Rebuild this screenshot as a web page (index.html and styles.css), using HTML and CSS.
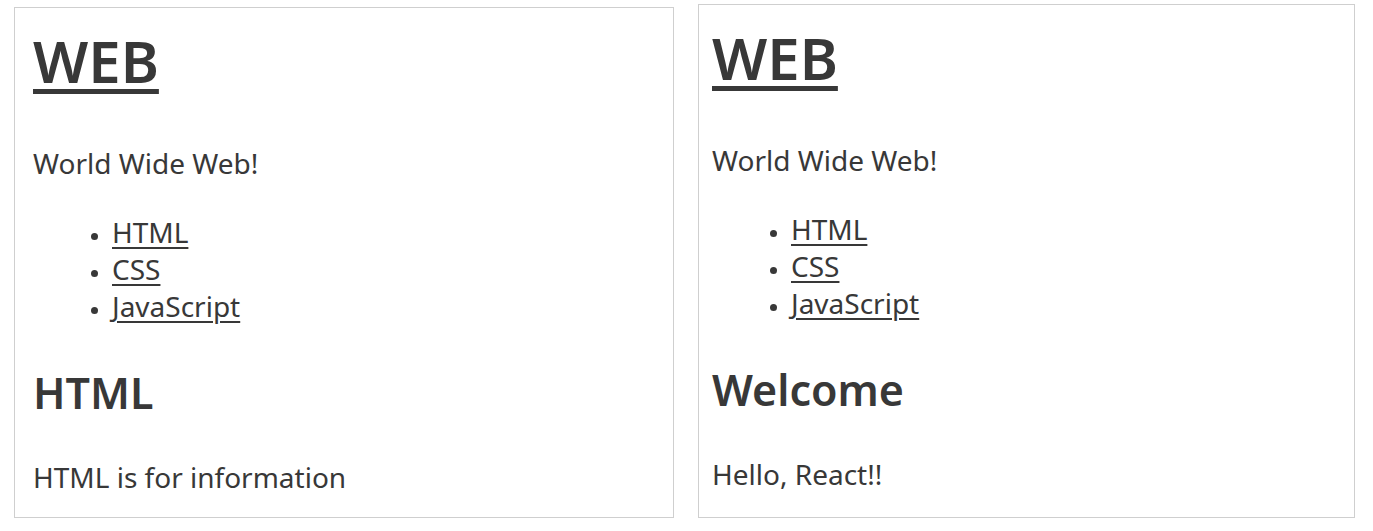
FILE: index.html
```html
<!DOCTYPE html>
<html lang="en">
<head>
<meta charset="utf-8">
<title>WEB</title>
<link rel="stylesheet" href="styles.css">
</head>
<body>
<div class="page">
  <div class="panel panel-left">
    <h1 class="title"><a href="#">WEB</a></h1>
    <p class="text">World Wide Web!</p>
    <ul class="nav">
      <li><a href="#">HTML</a></li>
      <li><a href="#">CSS</a></li>
      <li><a href="#">JavaScript</a></li>
    </ul>
    <h2 class="subtitle">HTML</h2>
    <p class="text">HTML is for information</p>
  </div>
  <div class="panel panel-right">
    <h1 class="title"><a href="#">WEB</a></h1>
    <p class="text">World Wide Web!</p>
    <ul class="nav">
      <li><a href="#">HTML</a></li>
      <li><a href="#">CSS</a></li>
      <li><a href="#">JavaScript</a></li>
    </ul>
    <h2 class="subtitle">Welcome</h2>
    <p class="text">Hello, React!!</p>
  </div>
</div>
</body>
</html>
```

FILE: styles.css
```css
html, body {
  margin: 0;
  padding: 0;
  background: #ffffff;
}

body {
  font-family: "Noto Sans", "Open Sans", sans-serif;
  color: #383838;
  font-size: 28px;
  line-height: 37px;
}

.page {
  display: flex;
  align-items: stretch;
  gap: 24px;
  padding: 4px 0 0 14px;
  height: 514px;
}

.panel {
  box-sizing: border-box;
  border: 1px solid #cfcfcf;
  background: #ffffff;
  padding: 0 14px 0 18px;
}

.panel-left {
  width: 660px;
  margin-top: 3px;
}

.panel-right {
  width: 657px;
  padding-left: 13px;
}

.title {
  margin: 18px 0 0 0;
  font-size: 58px;
  line-height: 70px;
  font-weight: 600;
}

.title a {
  color: #383838;
  text-decoration: underline;
  text-decoration-thickness: 5px;
  text-underline-offset: 6px;
}

.text {
  margin: 49px 0 0 0;
}

.nav {
  margin: 32px 0 0 0;
  padding-left: 79px;
}

.nav li::marker {
  font-size: 21px;
}

.nav a {
  color: #383838;
  text-decoration: underline;
  text-decoration-thickness: 2px;
  text-underline-offset: 4px;
}

.subtitle {
  margin: 42px 0 0 0;
  font-size: 43px;
  line-height: 52px;
  font-weight: 600;
}

.subtitle + .text {
  margin-top: 40px;
}
```
